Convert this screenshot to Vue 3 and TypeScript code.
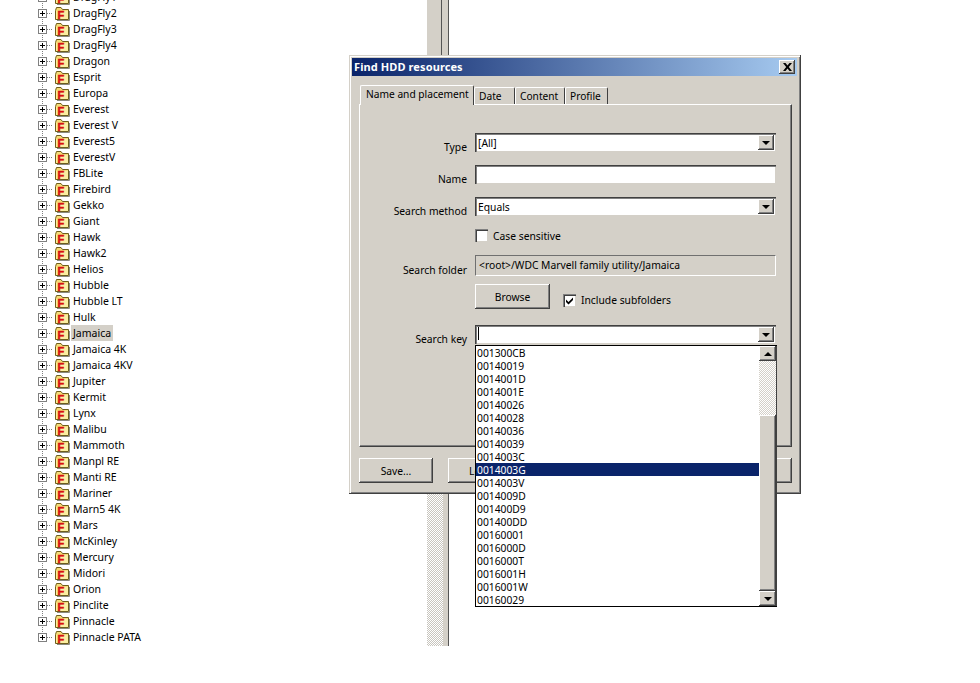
<template>
  <div class="desktop">
    <ul class="tree">
      <li v-for="(name, i) in drives" :key="name" class="node" :class="{ last: i === drives.length - 1 }">
        <span class="expander"></span>
        <span class="branch"></span>
        <svg class="folder" width="16" height="16" viewBox="0 0 16 16" aria-hidden="true">
          <path d="M1.500 5.500 L2.500 2.500 H7 L8.500 4.500 H14.500 V14.500 H1.500 Z" fill="#f5dc78" stroke="#6e5f1c" />
          <path d="M2 6 H14 V14 H2 Z" fill="#fbeea0" />
          <path d="M15.500 6 V15.500 H3" fill="none" stroke="#8a8a80" />
          <text x="3.500" y="13.500" class="folder-f">F</text>
        </svg>
        <span class="node-name" :class="{ picked: name === 'Jamaica' }">{{ name }}</span>
      </li>
    </ul>

    <div class="splitter">
      <div class="splitter-top"></div>
      <div class="splitter-bottom"></div>
    </div>

    <section class="dialog">
      <header class="titlebar">
        <span class="title">Find HDD resources</span>
        <button class="close" type="button">
          <svg width="9" height="8" viewBox="0 0 9 8"><path d="M0 0h2.500L4.500 2.500 6.500 0H9L5.800 4 9 8H6.500L4.500 5.500 2.500 8H0l3.200-4z" fill="#000" /></svg>
        </button>
      </header>

      <nav class="tabs">
        <span v-for="tab in tabs" :key="tab.label" class="tab" :class="{ active: tab.active }" :style="{ width: tab.width + 'px' }">{{ tab.label }}</span>
      </nav>

      <div class="panel">
        <div class="row">
          <label>Type</label>
          <div class="field combo">
            <span class="value">[All]</span>
            <span class="drop"><i class="arrow"></i></span>
          </div>
        </div>
        <div class="row row-name">
          <label>Name</label>
          <div class="field"></div>
        </div>
        <div class="row row-name">
          <label>Search method</label>
          <div class="field combo">
            <span class="value">Equals</span>
            <span class="drop"><i class="arrow"></i></span>
          </div>
        </div>
        <div class="row row-case">
          <span></span>
          <div class="check-line">
            <span class="check"></span>
            <span class="check-text">Case sensitive</span>
          </div>
        </div>
        <div class="row row-folder">
          <label>Search folder</label>
          <div class="field readonly">&lt;root&gt;/WDC Marvell family utility/Jamaica</div>
        </div>
        <div class="row row-browse">
          <span></span>
          <div class="browse-line">
            <button class="btn browse" type="button">Browse</button>
            <div class="check-line">
              <span class="check">
                <svg width="9" height="9" viewBox="0 0 9 9"><path d="M1 3.500 3.500 6 8 1.500V4L3.500 8.500 1 6z" fill="#000" /></svg>
              </span>
              <span>Include subfolders</span>
            </div>
          </div>
        </div>
        <div class="row row-key">
          <label>Search key</label>
          <div class="field combo key">
            <span class="caret"></span>
            <span class="drop"><i class="arrow"></i></span>
            <div class="popup">
              <ul class="options">
                <li v-for="key in keys" :key="key" :class="{ selected: key === '0014003G' }">{{ key }}</li>
              </ul>
              <div class="scrollbar">
                <span class="sb-btn"><i class="arrow up"></i></span>
                <span class="sb-track"></span>
                <span class="sb-thumb"></span>
                <span class="sb-btn"><i class="arrow"></i></span>
              </div>
            </div>
          </div>
        </div>
      </div>

      <footer class="actions">
        <button class="btn" type="button">Save...</button>
        <button class="btn" type="button">Load...</button>
        <button class="btn end" type="button"></button>
      </footer>
    </section>
  </div>
</template>

<script setup lang="ts">
interface Tab {
  label: string
  width: number
  active?: boolean
}

const drives: string[] = [
  'DragFly1', 'DragFly2', 'DragFly3', 'DragFly4', 'Dragon', 'Esprit', 'Europa', 'Everest', 'Everest V',
  'Everest5', 'EverestV', 'FBLite', 'Firebird', 'Gekko', 'Giant', 'Hawk', 'Hawk2', 'Helios', 'Hubble',
  'Hubble LT', 'Hulk', 'Jamaica', 'Jamaica 4K', 'Jamaica 4KV', 'Jupiter', 'Kermit', 'Lynx', 'Malibu',
  'Mammoth', 'Manpl RE', 'Manti RE', 'Mariner', 'Marn5 4K', 'Mars', 'McKinley', 'Mercury', 'Midori',
  'Orion', 'Pinclite', 'Pinnacle', 'Pinnacle PATA'
]

const tabs: Tab[] = [
  { label: 'Name and placement', width: 114, active: true },
  { label: 'Date', width: 41 },
  { label: 'Content', width: 50 },
  { label: 'Profile', width: 43 }
]

const keys: string[] = [
  '001300CB', '00140019', '0014001D', '0014001E', '00140026', '00140028', '00140036', '00140039',
  '0014003C', '0014003G', '0014003V', '0014009D', '001400D9', '001400DD', '00160001', '0016000D',
  '0016000T', '0016001H', '0016001W', '00160029'
]
</script>

<style>
html,
body {
  background: #fff;
  overflow: hidden;
}
</style>

<style scoped>
.desktop {
  position: relative;
  display: flex;
  width: 980px;
  height: 683px;
  overflow: hidden;
  background: #fff;
  color: #000;
  font-family: "Noto Sans", "Liberation Sans", sans-serif;
  font-size: 10.5px;
}

.tree {
  width: 427px;
  margin: -11px 0 0;
  padding: 0;
  list-style: none;
}

.node {
  display: flex;
  align-items: center;
  height: 16px;
  padding-left: 38px;
  background: repeating-linear-gradient(to bottom, #808080 0 1px, transparent 1px 2px) 42px 0 / 1px 100% no-repeat;
}

.node.last {
  background-size: 1px 50%;
}

.expander {
  position: relative;
  box-sizing: border-box;
  flex: none;
  width: 9px;
  height: 9px;
  border: 1px solid #808080;
  background: #fff;
}

.expander::before {
  content: "";
  position: absolute;
  left: 1px;
  top: 3px;
  width: 5px;
  height: 1px;
  background: #000;
}

.expander::after {
  content: "";
  position: absolute;
  left: 3px;
  top: 1px;
  width: 1px;
  height: 5px;
  background: #000;
}

.branch {
  flex: none;
  width: 6px;
  height: 1px;
  margin-right: 1px;
  background: repeating-linear-gradient(to right, #808080 0 1px, transparent 1px 2px);
}

.folder {
  flex: none;
}

.folder-f {
  font-family: "Liberation Sans", sans-serif;
  font-size: 11px;
  font-weight: 700;
  fill: #d81010;
  stroke: #d81010;
  stroke-width: 0.6px;
}

.node-name {
  margin-left: 1px;
  padding: 0 2px;
  line-height: 16px;
  white-space: nowrap;
}

.node-name.picked {
  background: #d4d0c8;
}

.splitter {
  display: flex;
  flex-direction: column;
  height: 646px;
}

.splitter-top {
  box-sizing: border-box;
  flex: none;
  width: 22px;
  height: 55px;
  background: linear-gradient(to right, #d4d0c8 0 14px, #555 14px 15px, #d4d0c8 15px 21px);
  border-right: 1px solid #555;
}

.splitter-bottom {
  box-sizing: border-box;
  flex: 1;
  width: 22px;
  background:
    linear-gradient(to right, transparent 0 16px, #d4d0c8 16px),
    repeating-conic-gradient(#c8c5be 0 25%, #fff 0 50%) 0 0 / 2px 2px;
  border-right: 1px solid #555;
}

.dialog {
  position: absolute;
  left: 349px;
  top: 55px;
  box-sizing: border-box;
  width: 452px;
  height: 439px;
  padding: 3px;
  background: #d4d0c8;
  border-right: 1px solid #404040;
  border-bottom: 1px solid #404040;
  box-shadow: inset 1px 1px 0 #d4d0c8, inset 2px 2px 0 #fff, inset -1px -1px 0 #808080;
  font-size: 10.3px;
}

.titlebar {
  display: flex;
  align-items: center;
  justify-content: space-between;
  height: 18px;
  padding: 0 2px;
  background: linear-gradient(to right, #0a246a, #a6caf0);
  color: #fff;
  font-size: 11px;
  font-weight: 700;
}

.title {
  position: relative;
  top: -1px;
  letter-spacing: 0.1px;
}

.close {
  display: flex;
  align-items: center;
  justify-content: center;
  box-sizing: border-box;
  width: 16px;
  height: 14px;
  padding: 0;
  border: 0;
  background: #d4d0c8;
  box-shadow: inset -1px -1px 0 #404040, inset 1px 1px 0 #fff, inset -2px -2px 0 #808080;
}

.tabs {
  display: flex;
  align-items: flex-end;
  height: 25px;
  margin-top: 3px;
  padding-left: 8px;
  font-size: 10.2px;
}

.tab {
  box-sizing: border-box;
  height: 17px;
  padding-left: 4px;
  line-height: 17px;
  border-top: 1px solid #fff;
  border-left: 1px solid #fff;
  border-right: 1px solid #404040;
  border-radius: 2px 2px 0 0;
  white-space: nowrap;
}

.tab.active {
  position: relative;
  z-index: 1;
  height: 20px;
  margin-bottom: -1px;
  padding: 0 0 3px 5px;
  background: #d4d0c8;
}

.panel {
  box-sizing: border-box;
  width: 433px;
  height: 343px;
  margin-left: 7px;
  padding-top: 28px;
  border: 1px solid;
  border-color: #fff #404040 #404040 #fff;
  box-shadow: inset -1px -1px 0 #808080;
}

.row {
  display: grid;
  grid-template-columns: 107px 301px;
  column-gap: 8px;
}

.row label {
  align-self: end;
  margin-bottom: -2px;
  text-align: right;
  white-space: nowrap;
}

.row-name {
  margin-top: 13px;
}

.row-case {
  margin-top: 13px;
}

.row-folder {
  margin-top: 14px;
}

.row-folder label {
  margin-bottom: -1px;
}

.row-browse {
  margin-top: 8px;
}

.row-key {
  margin-top: 16px;
}

.field {
  position: relative;
  box-sizing: border-box;
  height: 19px;
  padding: 2px 0 0 3px;
  background: #fff;
  box-shadow: inset 1px 1px 0 #404040, inset 2px 2px 0 #808080, inset -1px -1px 0 #d4d0c8;
  line-height: 16px;
}

.value {
  display: block;
}

.readonly {
  height: 21px;
  padding-top: 1px;
  background: #d4d0c8;
  border: 1px solid;
  border-color: #707070 #fff #fff #707070;
  box-shadow: none;
}

.drop {
  position: absolute;
  right: 2px;
  top: 2px;
  display: flex;
  align-items: center;
  justify-content: center;
  width: 16px;
  height: 15px;
  background: #d4d0c8;
  box-shadow: inset -1px -1px 0 #404040, inset 1px 1px 0 #fff, inset -2px -2px 0 #808080;
}

.arrow {
  width: 0;
  height: 0;
  border-left: 4px solid transparent;
  border-right: 4px solid transparent;
  border-top: 4px solid #000;
}

.arrow.up {
  border-top: 0;
  border-bottom: 4px solid #000;
}

.caret {
  display: block;
  width: 1px;
  height: 13px;
  background: #000;
}

.check-line {
  display: flex;
  align-items: center;
  gap: 5px;
  height: 12px;
}

.check-text {
  padding-top: 2px;
}

.check {
  display: flex;
  align-items: center;
  justify-content: center;
  box-sizing: border-box;
  width: 13px;
  height: 13px;
  background: #fff;
  box-shadow: inset 1px 1px 0 #808080, inset 2px 2px 0 #404040, inset -1px -1px 0 #d4d0c8;
}

.browse-line {
  display: flex;
  align-items: flex-start;
  gap: 13px;
}

.browse-line .check-line {
  margin-top: 10px;
}

.btn {
  box-sizing: border-box;
  width: 74px;
  height: 25px;
  padding: 0;
  border: 0;
  background: #d4d0c8;
  color: #000;
  font: inherit;
  box-shadow: inset -1px -1px 0 #404040, inset 1px 1px 0 #fff, inset -2px -2px 0 #808080;
}

.browse {
  width: 75px;
}

.popup {
  position: absolute;
  left: 0;
  top: calc(100% + 1px);
  z-index: 3;
  display: flex;
  box-sizing: border-box;
  width: 302px;
  height: 262px;
  background: #fff;
  border: 1px solid #000;
  border-right: 0;
}

.options {
  width: 284px;
  margin: 0;
  padding: 0;
  list-style: none;
}

.options li {
  height: 13px;
  padding-left: 1px;
  line-height: 15px;
}

.options li.selected {
  background: #0a246a;
  color: #fff;
}

.scrollbar {
  display: flex;
  flex-direction: column;
  width: 17px;
  border-right: 1px solid #404040;
}

.sb-btn {
  display: flex;
  flex: none;
  align-items: center;
  justify-content: center;
  height: 15px;
  background: #d4d0c8;
  box-shadow: inset -1px -1px 0 #404040, inset 1px 1px 0 #fff, inset -2px -2px 0 #808080;
}

.sb-track {
  flex: none;
  height: 54px;
  background: repeating-conic-gradient(#d4d0c8 0 25%, #fff 0 50%) 0 0 / 2px 2px;
}

.sb-thumb {
  flex: 1;
  background: #d4d0c8;
  box-shadow: inset -1px -1px 0 #404040, inset 1px 1px 0 #fff, inset -2px -2px 0 #808080;
}

.actions {
  display: flex;
  gap: 15px;
  margin: 11px 5px 0 7px;
  letter-spacing: 0.8px;
}

.end {
  margin-left: auto;
}
</style>
